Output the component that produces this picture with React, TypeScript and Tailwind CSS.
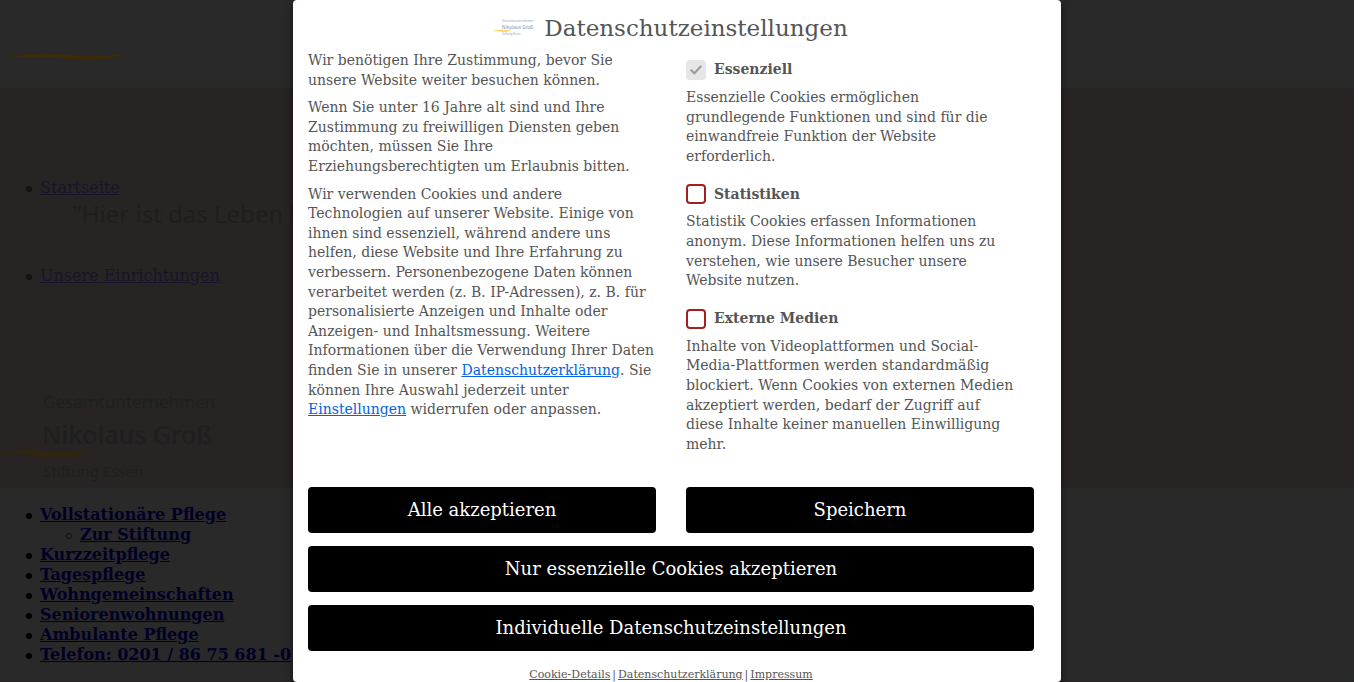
import { ReactNode } from "react";

const careLinks = [
  "Kurzzeitpflege",
  "Tagespflege",
  "Wohngemeinschaften",
  "Seniorenwohnungen",
  "Ambulante Pflege",
  "Telefon: 0201 / 86 75 681 -0",
];

const groups = [
  {
    id: "essential",
    name: "Essenziell",
    locked: true,
    text: "Essenzielle Cookies ermöglichen grundlegende Funktionen und sind für die einwandfreie Funktion der Website erforderlich.",
  },
  {
    id: "statistics",
    name: "Statistiken",
    locked: false,
    text: "Statistik Cookies erfassen Informationen anonym. Diese Informationen helfen uns zu verstehen, wie unsere Besucher unsere Website nutzen.",
  },
  {
    id: "media",
    name: "Externe Medien",
    locked: false,
    text: "Inhalte von Videoplattformen und Social-Media-Plattformen werden standardmäßig blockiert. Wenn Cookies von externen Medien akzeptiert werden, bedarf der Zugriff auf diese Inhalte keiner manuellen Einwilligung mehr.",
  },
];

const dot =
  "before:-ml-3.5 before:mr-2 before:inline-block before:size-1.5 before:rounded-full before:align-middle before:content-['']";

function Swoosh({ className }: { className: string }) {
  return (
    <svg viewBox="0 0 118 8" preserveAspectRatio="none" className={className} aria-hidden="true">
      <path d="M0 4.200C12 1.500 24 0.600 36 0.800C54 1 64 3.200 84 3.200C98 3.200 108 2.200 118 0C108 5 96 7.600 78 7.600C60 7.600 46 5 28 4.800C16 4.600 8 5 0 5Z" fill="currentColor" />
    </svg>
  );
}

function Logo({ className, swoosh }: { className: string; swoosh: string }) {
  return (
    <svg viewBox="0 0 216 98" className={className} role="img" aria-label="Nikolaus Groß">
      <g fill="currentColor" fontFamily='"Noto Sans", sans-serif'>
        <text x="43" y="18" fontSize="17">Gesamtunternehmen</text>
        <text x="42" y="54" fontSize="25" fontWeight="500">Nikolaus Groß</text>
        <text x="43" y="87" fontSize="15">Stiftung Essen</text>
      </g>
      <path
        className={swoosh}
        d="M-4 65C6 61 16 60 28 60C42 60.5 48 62.500 62 62.500C74 62.500 82 61.500 89 59.500C80 66 70 68 58 68C42 68 34 64.500 20 64C10 63.500 4 64 -4 65Z"
      />
    </svg>
  );
}

function ActionButton({ children }: { children: ReactNode }) {
  return (
    <button type="button" className="h-[46px] w-full rounded bg-black px-3 text-lg text-white">
      {children}
    </button>
  );
}

function Consent() {
  return (
    <div
      role="dialog"
      aria-labelledby="consent-title"
      className="h-full w-full max-w-3xl overflow-hidden rounded bg-white pr-[27px] pl-[15px] text-sm leading-[1.4] text-[#555] shadow-[0_4px_8px_rgba(0,0,0,0.5)]"
    >
      <div className="flex items-center justify-center gap-2.5 pt-[11px]">
        <Logo className="h-[18px] w-10 text-[#8fa3b8]" swoosh="fill-[#fbc93d] stroke-[#fbc93d] stroke-2" />
        <h1 id="consent-title" className="text-[23px] leading-[34px]">Datenschutzeinstellungen</h1>
      </div>

      <div className="grid grid-cols-2 gap-[30px]">
        <div className="flex flex-col gap-2 pt-1.5">
          <p>Wir benötigen Ihre Zustimmung, bevor Sie unsere Website weiter besuchen können.</p>
          <p>
            Wenn Sie unter 16 Jahre alt sind und Ihre Zustimmung zu freiwilligen Diensten geben möchten, müssen Sie
            Ihre Erziehungsberechtigten um Erlaubnis bitten.
          </p>
          <p>
            Wir verwenden Cookies und andere Technologien auf unserer Website. Einige von ihnen sind essenziell,
            während andere uns helfen, diese Website und Ihre Erfahrung zu verbessern. Personenbezogene Daten können
            verarbeitet werden (z. B. IP-Adressen), z. B. für personalisierte Anzeigen und Inhalte oder Anzeigen- und
            Inhaltsmessung. Weitere Informationen über die Verwendung Ihrer Daten finden Sie in unserer{" "}
            <a href="#datenschutz" className="text-[#0063e3] underline">Datenschutzerklärung</a>. Sie können Ihre
            Auswahl jederzeit unter{" "}
            <a href="#einstellungen" className="text-[#0063e3] underline">Einstellungen</a> widerrufen oder anpassen.
          </p>
        </div>

        <ul className="flex flex-col gap-[18px] pt-[15px] pr-[15px]">
          {groups.map((g) => (
            <li key={g.id}>
              <label htmlFor={g.id} className="flex h-5 items-center gap-2 font-bold">
                <span className="grid size-5 shrink-0">
                  <input
                    id={g.id}
                    type="checkbox"
                    defaultChecked={g.locked}
                    disabled={g.locked}
                    className="peer col-start-1 row-start-1 size-5 appearance-none rounded border-2 border-[#a02024] bg-white disabled:border-[#e6e6e6] disabled:bg-[#e6e6e6]"
                  />
                  <svg viewBox="0 0 20 20" className="pointer-events-none invisible col-start-1 row-start-1 size-5 peer-checked:visible" aria-hidden="true">
                    <path d="M4.800 9.800L8.300 13.300L15.200 6" fill="none" stroke="#999" strokeWidth="2" />
                  </svg>
                </span>
                {g.name}
              </label>
              <p className="mt-2">{g.text}</p>
            </li>
          ))}
        </ul>
      </div>

      <div className="mt-[33px] grid grid-cols-2 gap-x-[30px] gap-y-[13px]">
        <ActionButton>Alle akzeptieren</ActionButton>
        <ActionButton>Speichern</ActionButton>
        <div className="col-span-2"><ActionButton>Nur essenzielle Cookies akzeptieren</ActionButton></div>
        <div className="col-span-2"><ActionButton>Individuelle Datenschutzeinstellungen</ActionButton></div>
      </div>

      <nav className="mt-4 flex justify-center gap-0.5 text-[11px] leading-4">
        <a href="#details" className="underline">Cookie-Details</a>
        <span>|</span>
        <a href="#datenschutz" className="underline">Datenschutzerklärung</a>
        <span>|</span>
        <a href="#impressum" className="underline">Impressum</a>
      </nav>
    </div>
  );
}

export default function App() {
  return (
    <div className='h-screen overflow-hidden bg-white pr-3 font-["DejaVu_Serif",serif]'>
      <div className="relative h-full overflow-hidden bg-[#292929]">
        <header className="h-[88px] pt-[53px] pl-2.5">
          <Swoosh className="h-[7px] w-[118px] text-[#3a2c0a]" />
        </header>

        <section className="h-[400px] bg-[#282423] pt-[90px]">
          <ul className="pl-10 leading-5">
            <li className={`h-[88px] before:bg-[#141212] ${dot}`}>
              <a href="#start" className="text-[#19142a] underline">Startseite</a>
              <p className='pl-8 font-["Noto_Sans",sans-serif] text-2xl whitespace-nowrap text-[#1f1e1d]'>
                "Hier ist das Leben lebenswert"
              </p>
            </li>
            <li className={`before:bg-[#141212] ${dot}`}>
              <a href="#einrichtungen" className="text-[#19142a] underline">Unsere Einrichtungen</a>
            </li>
          </ul>
          <Logo className="mt-[104px] h-[98px] w-[216px] text-[#1e1f20]" swoosh="fill-[#30260d]" />
        </section>

        <nav className="h-[193px] pt-[17px]">
          <ul className="pl-10 leading-5">
            <li className={`before:bg-black ${dot}`}>
              <a href="#pflege" className="font-bold text-[#000026] underline">Vollstationäre Pflege</a>
              <ul className="pl-10">
                <li className={`before:border before:border-[#111] ${dot}`}>
                  <a href="#stiftung" className="font-bold text-[#000026] underline">Zur Stiftung</a>
                </li>
              </ul>
            </li>
            {careLinks.map((label) => (
              <li key={label} className={`before:bg-black ${dot}`}>
                <a href="#pflege" className="font-bold text-[#000026] underline">{label}</a>
              </li>
            ))}
          </ul>
        </nav>
        <footer className="h-10 bg-[#282423]" />

        <div className="absolute inset-0 flex justify-center">
          <Consent />
        </div>
      </div>
    </div>
  );
}
